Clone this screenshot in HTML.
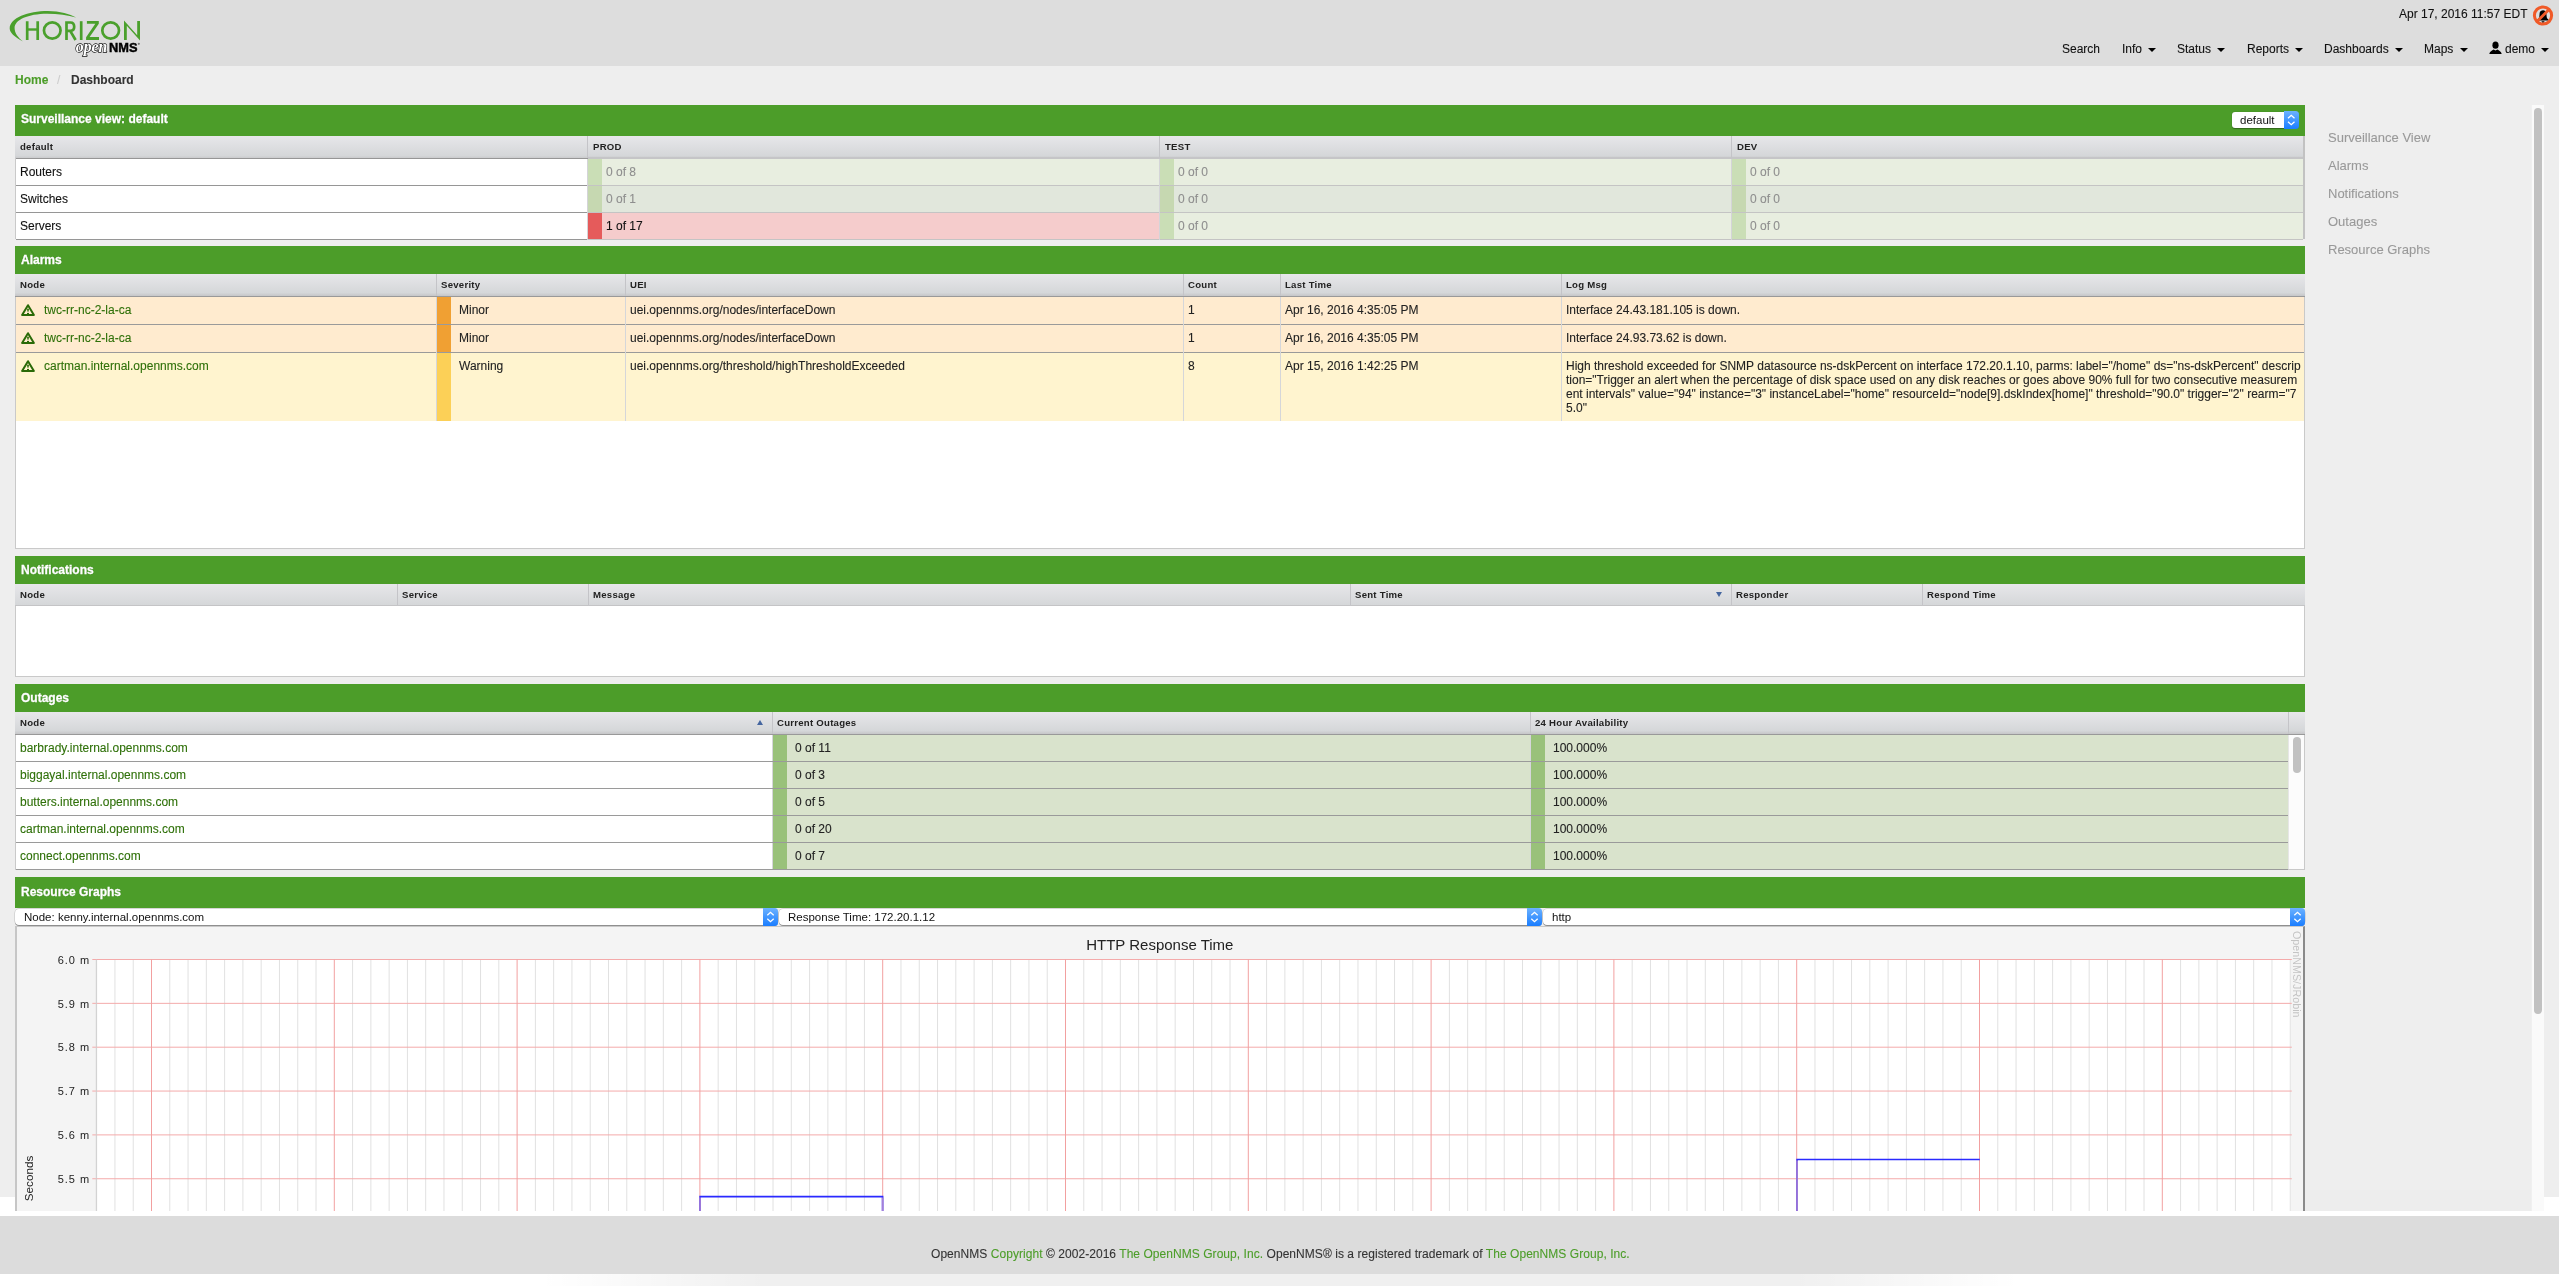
<!DOCTYPE html><html><head><meta charset="utf-8"><title>Dashboard</title><style>
*{box-sizing:border-box;margin:0;padding:0}
html,body{width:2559px;height:1286px;overflow:hidden;background:#fff}
body{position:relative;font-family:"Liberation Sans", sans-serif;font-size:12px;color:#222}
.abs{position:absolute}
.t{position:absolute;white-space:nowrap;line-height:1;-webkit-text-stroke:0.1px currentColor;will-change:transform}
.ph{position:absolute;left:15px;width:2290px;background:#4c9d29;color:#fff;font-weight:bold;font-size:12px}
.hdr{position:absolute;background:linear-gradient(#e7e7ea,#d5d7d9 85%,#c6c6c8);border-bottom:1px solid #999}
.hc{position:absolute;top:0;height:100%;border-left:1px solid #c4c4c8;font-size:10px;font-weight:bold;color:#222;white-space:nowrap}
.row{position:absolute;left:15px;width:2290px;border-bottom:1px solid #a9a9a9}
.cell{position:absolute;top:0;height:100%;white-space:nowrap}
.lnk{color:#2f7009}
</style></head><body>
<div class="abs" style="left:0;top:0;width:2559px;height:66px;background:#dddddd"></div>
<div class="abs" style="left:0;top:66px;width:2559px;height:1131px;background:#eeeeee"></div>
<div class="abs" style="left:15px;top:1190px;width:2529px;height:21px;background:#ededed"></div>
<div class="abs" style="left:0;top:1216px;width:2559px;height:58px;background:#dcdcdc"></div>
<div class="abs" style="left:540px;top:1274px;width:1480px;height:12px;background:linear-gradient(90deg,rgba(0,0,0,0),rgba(0,0,0,0.06) 15%,rgba(0,0,0,0.06) 85%,rgba(0,0,0,0))"></div>
<svg class="abs" style="left:0;top:0;will-change:transform" width="160" height="65" viewBox="0 0 160 65">
<path d="M23 41.6 C14 36.5 9.7 32.5 9.7 28.5 C9.7 18 28 11 47.8 11 C60 11 70 14 76 17.6 C68 15.3 58 13.8 47 13.8 C28 13.8 14.6 20 14.6 28 C14.6 33 18 37.5 23 41.6 Z" fill="#4aa02c"/>
<g fill="none" stroke="#4aa02c" stroke-width="2.7">
<path d="M27.2 21.2V40M37.7 21.2V40"/>
<path d="M27.2 29.5H37.7" stroke-width="2.4"/>
<ellipse cx="52.25" cy="30.5" rx="8.3" ry="8.1"/>
<path d="M66.5 21.2V40M66.5 22.5H70.5C73.8 22.5 74.2 24.5 74.2 26.8C74.2 29.2 73.2 30.9 70.5 30.9H66.5M70.2 30.9L75.6 40" stroke-linejoin="round"/>
<path d="M81.2 21.2V40"/>
<ellipse cx="110.65" cy="30.5" rx="8.35" ry="8.1"/>
</g>
<path d="M86.9 21.1H98.8V23.7L89.6 37H99V40H86.1V37.3L95.3 23.7H86.9Z" fill="#4aa02c"/>
<path d="M124 40V20.6L137.2 35.3V21.1H140V40.4L126.8 25.7V40Z" fill="#4aa02c"/>
<text x="75.8" y="52.1" font-family="Liberation Serif" font-style="italic" font-weight="bold" font-size="16.5" fill="#fff" stroke="#111" stroke-width="1.3" paint-order="stroke" textLength="31.6" lengthAdjust="spacingAndGlyphs">open</text>
<text x="109" y="51.6" font-family="Liberation Sans" font-weight="bold" font-size="13" fill="#000" stroke="#000" stroke-width="0.45" textLength="28.5" lengthAdjust="spacingAndGlyphs">NMS</text>
<circle cx="138.8" cy="43.8" r="1.1" fill="#777"/>
</svg>
<div class="t" style="left:2399px;top:8px;font-size:12px;color:#111">Apr 17, 2016 11:57 EDT</div>
<svg class="abs" style="left:2532px;top:5px" width="22" height="22" viewBox="0 0 22 22">
<path d="M11 5.2c-1.9 0-3.3 1.4-3.4 3.4l-0.3 3.4c-0.1 1.1-0.9 2-1.8 2.6v0.8h11v-0.8c-0.9-0.6-1.7-1.5-1.8-2.6l-0.3-3.4C14.3 6.6 12.9 5.2 11 5.2zM9.5 16.2a1.5 1.5 0 0 0 3 0z" fill="#000"/>
<circle cx="11" cy="10.5" r="8.6" fill="none" stroke="#f05a28" stroke-width="3"/>
<path d="M17 4.5L5 16.5" stroke="#f05a28" stroke-width="3"/>
</svg>
<div class="t" style="left:2061.5px;top:43px;font-size:12px;color:#111">Search</div>
<div class="t" style="left:2121.8px;top:43px;font-size:12px;color:#111">Info</div>
<div class="abs" style="left:2147.8px;top:48px;width:0;height:0;border-left:4px solid transparent;border-right:4px solid transparent;border-top:4px solid #000"></div>
<div class="t" style="left:2176.7px;top:43px;font-size:12px;color:#111">Status</div>
<div class="abs" style="left:2216.7px;top:48px;width:0;height:0;border-left:4px solid transparent;border-right:4px solid transparent;border-top:4px solid #000"></div>
<div class="t" style="left:2246.8px;top:43px;font-size:12px;color:#111">Reports</div>
<div class="abs" style="left:2294.8px;top:48px;width:0;height:0;border-left:4px solid transparent;border-right:4px solid transparent;border-top:4px solid #000"></div>
<div class="t" style="left:2324.4px;top:43px;font-size:12px;color:#111">Dashboards</div>
<div class="abs" style="left:2395.1px;top:48px;width:0;height:0;border-left:4px solid transparent;border-right:4px solid transparent;border-top:4px solid #000"></div>
<div class="t" style="left:2424.4px;top:43px;font-size:12px;color:#111">Maps</div>
<div class="abs" style="left:2459.7px;top:48px;width:0;height:0;border-left:4px solid transparent;border-right:4px solid transparent;border-top:4px solid #000"></div>
<div class="t" style="left:2505.3px;top:43px;font-size:12px;color:#111">demo</div>
<div class="abs" style="left:2541.3px;top:48px;width:0;height:0;border-left:4px solid transparent;border-right:4px solid transparent;border-top:4px solid #000"></div>
<svg class="abs" style="left:2489px;top:41px" width="14" height="14" viewBox="0 0 14 14">
<ellipse cx="6.5" cy="4.2" rx="3.1" ry="3.6" fill="#000"/>
<path d="M0.3 13 C0.8 10.5 3 9.6 4.6 8.6 L6.5 9.6 L8.4 8.6 C10 9.6 12.2 10.5 12.7 13 Z" fill="#000"/>
</svg>
<div class="t" style="left:15.3px;top:74px;font-size:12px;font-weight:bold;color:#4c9d29">Home</div>
<div class="t" style="left:57px;top:74px;font-size:12px;color:#ccc">/</div>
<div class="t" style="left:70.7px;top:74px;font-size:12px;font-weight:bold;color:#333">Dashboard</div>
<div class="t" style="left:2327.6px;top:130.5px;font-size:13px;color:#999">Surveillance View</div>
<div class="t" style="left:2327.6px;top:158.5px;font-size:13px;color:#999">Alarms</div>
<div class="t" style="left:2327.6px;top:186.5px;font-size:13px;color:#999">Notifications</div>
<div class="t" style="left:2327.6px;top:214.5px;font-size:13px;color:#999">Outages</div>
<div class="t" style="left:2327.6px;top:242.5px;font-size:13px;color:#999">Resource Graphs</div>
<div class="abs" style="left:2531px;top:105px;width:13px;height:1106px;background:#fafafa;border-left:1px solid #f0f0f0"></div>
<div class="abs" style="left:2534px;top:108px;width:8px;height:906px;background:#c1c1c1;border-radius:4px"></div>
<div class="ph" style="top:105px;height:31px"></div>
<div class="t" style="left:21.3px;top:112.5px;font-size:12px;font-weight:bold;color:#fff;text-shadow:0 0 1px rgba(20,70,0,0.55);-webkit-text-stroke:0.3px #fff">Surveillance view: default</div>
<div class="abs" style="left:2232px;top:112px;width:53px;height:16px;background:#fff;border-radius:3px 0 0 3px;box-shadow:0 0.5px 1px rgba(0,0,0,0.35)"></div>
<div class="t" style="left:2239.9px;top:114.5px;font-size:11.5px;color:#111;-webkit-text-stroke:0">default</div>
<div class="abs" style="left:2284.2px;top:111px;width:14.5px;height:18px;background:linear-gradient(#6cb2ff,#1a7dff);border-radius:0 3.5px 3.5px 0"></div>
<svg class="abs" style="left:2284.2px;top:111px" width="14.5" height="18" viewBox="0 0 14.5 18"><path d="M4 7.3L7.25 4.3L10.5 7.3M4 10.7L7.25 13.7L10.5 10.7" fill="none" stroke="#fff" stroke-width="1.3"/></svg>
<div class="abs" style="left:15px;top:136px;width:2290px;height:103px;background:#fff;border:1px solid #c9c9c9;border-top:0"></div>
<div class="hdr" style="left:15px;top:136px;width:2290px;height:23px;border-bottom:0"></div><div class="abs" style="left:16px;top:158px;width:572px;height:1px;background:#969696"></div><div class="abs" style="left:588px;top:157px;width:1715px;height:2px;background:#c5c5c7"></div>
<div class="t" style="left:20px;top:142px;font-size:9.6px;font-weight:bold;color:#222;-webkit-text-stroke:0;letter-spacing:0.25px">default</div>
<div class="t" style="left:593px;top:142px;font-size:9.6px;font-weight:bold;color:#222;-webkit-text-stroke:0;letter-spacing:0.25px">PROD</div>
<div class="abs" style="left:587px;top:136px;width:1px;height:22px;background:#c4c4c8"></div>
<div class="t" style="left:1165px;top:142px;font-size:9.6px;font-weight:bold;color:#222;-webkit-text-stroke:0;letter-spacing:0.25px">TEST</div>
<div class="abs" style="left:1159px;top:136px;width:1px;height:22px;background:#c4c4c8"></div>
<div class="t" style="left:1737px;top:142px;font-size:9.6px;font-weight:bold;color:#222;-webkit-text-stroke:0;letter-spacing:0.25px">DEV</div>
<div class="abs" style="left:1731px;top:136px;width:1px;height:22px;background:#c4c4c8"></div>
<div class="abs" style="left:2303px;top:136px;width:2px;height:103px;background:#c2c2c2"></div>
<div class="abs" style="left:16px;top:159px;width:572px;height:27px;background:#fff;border-bottom:1px solid #969696"></div>
<div class="t" style="left:20px;top:166px;font-size:12px;color:#111">Routers</div>
<div class="abs" style="left:588px;top:159px;width:572px;height:27px;background:#e8eee0;border-bottom:1px solid #c4c4c4"></div>
<div class="abs" style="left:588px;top:159px;width:14px;height:26px;background:#cadeb6"></div>
<div class="t" style="left:606px;top:166px;font-size:12px;color:#8e8e8e">0 of 8</div>
<div class="abs" style="left:1160px;top:159px;width:572px;height:27px;background:#e8eee0;border-bottom:1px solid #c4c4c4"></div>
<div class="abs" style="left:1160px;top:159px;width:14px;height:26px;background:#cadeb6"></div>
<div class="t" style="left:1178px;top:166px;font-size:12px;color:#8e8e8e">0 of 0</div>
<div class="abs" style="left:1732px;top:159px;width:571px;height:27px;background:#e8eee0;border-bottom:1px solid #c4c4c4"></div>
<div class="abs" style="left:1732px;top:159px;width:14px;height:26px;background:#cadeb6"></div>
<div class="t" style="left:1750px;top:166px;font-size:12px;color:#8e8e8e">0 of 0</div>
<div class="abs" style="left:587px;top:159px;width:1px;height:27px;background:#d4d4d8"></div>
<div class="abs" style="left:1159px;top:159px;width:1px;height:27px;background:#d4d4d8"></div>
<div class="abs" style="left:1731px;top:159px;width:1px;height:27px;background:#d4d4d8"></div>
<div class="abs" style="left:16px;top:186px;width:572px;height:27px;background:#fff;border-bottom:1px solid #969696"></div>
<div class="t" style="left:20px;top:193px;font-size:12px;color:#111">Switches</div>
<div class="abs" style="left:588px;top:186px;width:572px;height:27px;background:#e1e7dc;border-bottom:1px solid #c4c4c4"></div>
<div class="abs" style="left:588px;top:186px;width:14px;height:26px;background:#c6d8b1"></div>
<div class="t" style="left:606px;top:193px;font-size:12px;color:#8e8e8e">0 of 1</div>
<div class="abs" style="left:1160px;top:186px;width:572px;height:27px;background:#e1e7dc;border-bottom:1px solid #c4c4c4"></div>
<div class="abs" style="left:1160px;top:186px;width:14px;height:26px;background:#c6d8b1"></div>
<div class="t" style="left:1178px;top:193px;font-size:12px;color:#8e8e8e">0 of 0</div>
<div class="abs" style="left:1732px;top:186px;width:571px;height:27px;background:#e1e7dc;border-bottom:1px solid #c4c4c4"></div>
<div class="abs" style="left:1732px;top:186px;width:14px;height:26px;background:#c6d8b1"></div>
<div class="t" style="left:1750px;top:193px;font-size:12px;color:#8e8e8e">0 of 0</div>
<div class="abs" style="left:587px;top:186px;width:1px;height:27px;background:#d4d4d8"></div>
<div class="abs" style="left:1159px;top:186px;width:1px;height:27px;background:#d4d4d8"></div>
<div class="abs" style="left:1731px;top:186px;width:1px;height:27px;background:#d4d4d8"></div>
<div class="abs" style="left:16px;top:213px;width:572px;height:27px;background:#fff;border-bottom:1px solid #969696"></div>
<div class="t" style="left:20px;top:220px;font-size:12px;color:#111">Servers</div>
<div class="abs" style="left:588px;top:213px;width:572px;height:27px;background:#f5cccc;border-bottom:1px solid #c4c4c4"></div>
<div class="abs" style="left:588px;top:213px;width:14px;height:26px;background:#e55b5b"></div>
<div class="t" style="left:606px;top:220px;font-size:12px;color:#111">1 of 17</div>
<div class="abs" style="left:1160px;top:213px;width:572px;height:27px;background:#e8eee0;border-bottom:1px solid #c4c4c4"></div>
<div class="abs" style="left:1160px;top:213px;width:14px;height:26px;background:#cadeb6"></div>
<div class="t" style="left:1178px;top:220px;font-size:12px;color:#8e8e8e">0 of 0</div>
<div class="abs" style="left:1732px;top:213px;width:571px;height:27px;background:#e8eee0;border-bottom:1px solid #c4c4c4"></div>
<div class="abs" style="left:1732px;top:213px;width:14px;height:26px;background:#cadeb6"></div>
<div class="t" style="left:1750px;top:220px;font-size:12px;color:#8e8e8e">0 of 0</div>
<div class="abs" style="left:587px;top:213px;width:1px;height:27px;background:#d4d4d8"></div>
<div class="abs" style="left:1159px;top:213px;width:1px;height:27px;background:#d4d4d8"></div>
<div class="abs" style="left:1731px;top:213px;width:1px;height:27px;background:#d4d4d8"></div>
<div class="ph" style="top:246px;height:28px"></div>
<div class="t" style="left:21px;top:253.5px;font-size:12px;font-weight:bold;color:#fff;text-shadow:0 0 1px rgba(20,70,0,0.55);-webkit-text-stroke:0.3px #fff">Alarms</div>
<div class="abs" style="left:15px;top:274px;width:2290px;height:275px;background:#fff;border:1px solid #c9c9c9;border-top:0"></div>
<div class="hdr" style="left:15px;top:274px;width:2290px;height:23px"></div>
<div class="t" style="left:20px;top:280px;font-size:9.6px;font-weight:bold;color:#222;-webkit-text-stroke:0;letter-spacing:0.25px">Node</div>
<div class="t" style="left:441px;top:280px;font-size:9.6px;font-weight:bold;color:#222;-webkit-text-stroke:0;letter-spacing:0.25px">Severity</div>
<div class="abs" style="left:436px;top:274px;width:1px;height:22px;background:#c4c4c8"></div>
<div class="t" style="left:630px;top:280px;font-size:9.6px;font-weight:bold;color:#222;-webkit-text-stroke:0;letter-spacing:0.25px">UEI</div>
<div class="abs" style="left:625px;top:274px;width:1px;height:22px;background:#c4c4c8"></div>
<div class="t" style="left:1188px;top:280px;font-size:9.6px;font-weight:bold;color:#222;-webkit-text-stroke:0;letter-spacing:0.25px">Count</div>
<div class="abs" style="left:1183px;top:274px;width:1px;height:22px;background:#c4c4c8"></div>
<div class="t" style="left:1285px;top:280px;font-size:9.6px;font-weight:bold;color:#222;-webkit-text-stroke:0;letter-spacing:0.25px">Last Time</div>
<div class="abs" style="left:1280px;top:274px;width:1px;height:22px;background:#c4c4c8"></div>
<div class="t" style="left:1566px;top:280px;font-size:9.6px;font-weight:bold;color:#222;-webkit-text-stroke:0;letter-spacing:0.25px">Log Msg</div>
<div class="abs" style="left:1561px;top:274px;width:1px;height:22px;background:#c4c4c8"></div>
<div class="abs" style="left:16px;top:297px;width:2288px;height:28px;background:#ffebcf;border-bottom:1px solid #9a9a9a;"></div>
<div class="abs" style="left:437px;top:297px;width:14px;height:27px;background:#f0a033"></div>
<div class="abs" style="left:436px;top:297px;width:1px;height:28px;background:#d5d6d9"></div>
<div class="abs" style="left:625px;top:297px;width:1px;height:28px;background:#d5d6d9"></div>
<div class="abs" style="left:1183px;top:297px;width:1px;height:28px;background:#d5d6d9"></div>
<div class="abs" style="left:1280px;top:297px;width:1px;height:28px;background:#d5d6d9"></div>
<div class="abs" style="left:1561px;top:297px;width:1px;height:28px;background:#d5d6d9"></div>
<svg class="abs" style="left:20px;top:303px" width="16" height="14" viewBox="0 0 16 14"><path d="M8 2.2L13.9 11.9H2.1Z" fill="none" stroke="#2a6a08" stroke-width="2" stroke-linejoin="round"/><path d="M7 5.8H9L8.5 8.8H7.5Z" fill="#2a6a08"/><rect x="7" y="9.9" width="2" height="1.6" fill="#2a6a08"/></svg>
<div class="t lnk" style="left:44px;top:303.5px">twc-rr-nc-2-la-ca</div>
<div class="t" style="left:459px;top:303.5px">Minor</div>
<div class="t" style="left:630px;top:303.5px">uei.opennms.org/nodes/interfaceDown</div>
<div class="t" style="left:1188px;top:303.5px">1</div>
<div class="t" style="left:1285px;top:303.5px">Apr 16, 2016 4:35:05 PM</div>
<div class="t" style="left:1566px;top:303.5px">Interface 24.43.181.105 is down.</div>
<div class="abs" style="left:16px;top:325px;width:2288px;height:28px;background:#ffebcf;border-bottom:1px solid #9a9a9a;"></div>
<div class="abs" style="left:437px;top:325px;width:14px;height:27px;background:#f0a033"></div>
<div class="abs" style="left:436px;top:325px;width:1px;height:28px;background:#d5d6d9"></div>
<div class="abs" style="left:625px;top:325px;width:1px;height:28px;background:#d5d6d9"></div>
<div class="abs" style="left:1183px;top:325px;width:1px;height:28px;background:#d5d6d9"></div>
<div class="abs" style="left:1280px;top:325px;width:1px;height:28px;background:#d5d6d9"></div>
<div class="abs" style="left:1561px;top:325px;width:1px;height:28px;background:#d5d6d9"></div>
<svg class="abs" style="left:20px;top:331px" width="16" height="14" viewBox="0 0 16 14"><path d="M8 2.2L13.9 11.9H2.1Z" fill="none" stroke="#2a6a08" stroke-width="2" stroke-linejoin="round"/><path d="M7 5.8H9L8.5 8.8H7.5Z" fill="#2a6a08"/><rect x="7" y="9.9" width="2" height="1.6" fill="#2a6a08"/></svg>
<div class="t lnk" style="left:44px;top:331.5px">twc-rr-nc-2-la-ca</div>
<div class="t" style="left:459px;top:331.5px">Minor</div>
<div class="t" style="left:630px;top:331.5px">uei.opennms.org/nodes/interfaceDown</div>
<div class="t" style="left:1188px;top:331.5px">1</div>
<div class="t" style="left:1285px;top:331.5px">Apr 16, 2016 4:35:05 PM</div>
<div class="t" style="left:1566px;top:331.5px">Interface 24.93.73.62 is down.</div>
<div class="abs" style="left:16px;top:353px;width:2288px;height:68px;background:#fff4cf;"></div>
<div class="abs" style="left:437px;top:353px;width:14px;height:68px;background:#fcd057"></div>
<div class="abs" style="left:436px;top:353px;width:1px;height:68px;background:#d5d6d9"></div>
<div class="abs" style="left:625px;top:353px;width:1px;height:68px;background:#d5d6d9"></div>
<div class="abs" style="left:1183px;top:353px;width:1px;height:68px;background:#d5d6d9"></div>
<div class="abs" style="left:1280px;top:353px;width:1px;height:68px;background:#d5d6d9"></div>
<div class="abs" style="left:1561px;top:353px;width:1px;height:68px;background:#d5d6d9"></div>
<svg class="abs" style="left:20px;top:359px" width="16" height="14" viewBox="0 0 16 14"><path d="M8 2.2L13.9 11.9H2.1Z" fill="none" stroke="#2a6a08" stroke-width="2" stroke-linejoin="round"/><path d="M7 5.8H9L8.5 8.8H7.5Z" fill="#2a6a08"/><rect x="7" y="9.9" width="2" height="1.6" fill="#2a6a08"/></svg>
<div class="t lnk" style="left:44px;top:359.5px">cartman.internal.opennms.com</div>
<div class="t" style="left:459px;top:359.5px">Warning</div>
<div class="t" style="left:630px;top:359.5px">uei.opennms.org/threshold/highThresholdExceeded</div>
<div class="t" style="left:1188px;top:359.5px">8</div>
<div class="t" style="left:1285px;top:359.5px">Apr 15, 2016 1:42:25 PM</div>
<div class="t" style="left:1566px;top:359.5px">High threshold exceeded for SNMP datasource ns-dskPercent on interface 172.20.1.10, parms: label=&quot;/home&quot; ds=&quot;ns-dskPercent&quot; descrip</div>
<div class="t" style="left:1566px;top:373.5px">tion=&quot;Trigger an alert when the percentage of disk space used on any disk reaches or goes above 90% full for two consecutive measurem</div>
<div class="t" style="left:1566px;top:387.5px">ent intervals&quot; value=&quot;94&quot; instance=&quot;3&quot; instanceLabel=&quot;home&quot; resourceId=&quot;node[9].dskIndex[home]&quot; threshold=&quot;90.0&quot; trigger=&quot;2&quot; rearm=&quot;7</div>
<div class="t" style="left:1566px;top:401.5px">5.0&quot;</div>
<div class="ph" style="top:556px;height:28px"></div>
<div class="t" style="left:21px;top:563.5px;font-size:12px;font-weight:bold;color:#fff;text-shadow:0 0 1px rgba(20,70,0,0.55);-webkit-text-stroke:0.3px #fff">Notifications</div>
<div class="abs" style="left:15px;top:584px;width:2290px;height:93px;background:#fff;border:1px solid #c9c9c9;border-top:0"></div>
<div class="hdr" style="left:15px;top:584px;width:2290px;height:22px;border-bottom-color:#c4c4c6;background:linear-gradient(#e7e7ea,#d5d7d9)"></div>
<div class="t" style="left:20px;top:590px;font-size:9.6px;font-weight:bold;color:#222;-webkit-text-stroke:0;letter-spacing:0.25px">Node</div>
<div class="t" style="left:402px;top:590px;font-size:9.6px;font-weight:bold;color:#222;-webkit-text-stroke:0;letter-spacing:0.25px">Service</div>
<div class="abs" style="left:397px;top:584px;width:1px;height:22px;background:#c4c4c8"></div>
<div class="t" style="left:593px;top:590px;font-size:9.6px;font-weight:bold;color:#222;-webkit-text-stroke:0;letter-spacing:0.25px">Message</div>
<div class="abs" style="left:588px;top:584px;width:1px;height:22px;background:#c4c4c8"></div>
<div class="t" style="left:1355px;top:590px;font-size:9.6px;font-weight:bold;color:#222;-webkit-text-stroke:0;letter-spacing:0.25px">Sent Time</div>
<div class="abs" style="left:1350px;top:584px;width:1px;height:22px;background:#c4c4c8"></div>
<div class="t" style="left:1736px;top:590px;font-size:9.6px;font-weight:bold;color:#222;-webkit-text-stroke:0;letter-spacing:0.25px">Responder</div>
<div class="abs" style="left:1731px;top:584px;width:1px;height:22px;background:#c4c4c8"></div>
<div class="t" style="left:1927px;top:590px;font-size:9.6px;font-weight:bold;color:#222;-webkit-text-stroke:0;letter-spacing:0.25px">Respond Time</div>
<div class="abs" style="left:1922px;top:584px;width:1px;height:22px;background:#c4c4c8"></div>
<div class="abs" style="left:1715.7px;top:591.8px;width:0;height:0;border-left:3.2px solid transparent;border-right:3.2px solid transparent;border-top:5.3px solid #4566a0"></div>
<div class="ph" style="top:684px;height:28px"></div>
<div class="t" style="left:21px;top:691.5px;font-size:12px;font-weight:bold;color:#fff;text-shadow:0 0 1px rgba(20,70,0,0.55);-webkit-text-stroke:0.3px #fff">Outages</div>
<div class="abs" style="left:15px;top:712px;width:2290px;height:158px;background:#fff;border:1px solid #c9c9c9;border-top:0"></div>
<div class="hdr" style="left:15px;top:712px;width:2290px;height:23px"></div>
<div class="t" style="left:20px;top:718px;font-size:9.6px;font-weight:bold;color:#222;-webkit-text-stroke:0;letter-spacing:0.25px">Node</div>
<div class="t" style="left:777px;top:718px;font-size:9.6px;font-weight:bold;color:#222;-webkit-text-stroke:0;letter-spacing:0.25px">Current Outages</div>
<div class="abs" style="left:772px;top:712px;width:1px;height:22px;background:#c4c4c8"></div>
<div class="t" style="left:1535px;top:718px;font-size:9.6px;font-weight:bold;color:#222;-webkit-text-stroke:0;letter-spacing:0.25px">24 Hour Availability</div>
<div class="abs" style="left:1530px;top:712px;width:1px;height:22px;background:#c4c4c8"></div>
<div class="abs" style="left:2288px;top:712px;width:1px;height:22px;background:#c4c4c8"></div>
<div class="abs" style="left:757px;top:720px;width:0;height:0;border-left:3px solid transparent;border-right:3px solid transparent;border-bottom:5px solid #4566a0"></div>
<div class="abs" style="left:16px;top:735px;width:756px;height:27px;background:#fff;border-bottom:1px solid #9a9a9a"></div>
<div class="abs" style="left:772px;top:735px;width:1516px;height:27px;background:#d9e3cc;border-bottom:1px solid #9a9a9a"></div>
<div class="abs" style="left:773px;top:735px;width:14px;height:26px;background:#99c17a"></div>
<div class="abs" style="left:1531px;top:735px;width:14px;height:26px;background:#99c17a"></div>
<div class="abs" style="left:772px;top:735px;width:1px;height:26px;background:#d6d6da"></div>
<div class="abs" style="left:1530px;top:735px;width:1px;height:26px;background:#d6d6da"></div>
<div class="t lnk" style="left:20.3px;top:742px">barbrady.internal.opennms.com</div>
<div class="t" style="left:795px;top:742px">0 of 11</div>
<div class="t" style="left:1552.7px;top:742px">100.000%</div>
<div class="abs" style="left:16px;top:762px;width:756px;height:27px;background:#fff;border-bottom:1px solid #9a9a9a"></div>
<div class="abs" style="left:772px;top:762px;width:1516px;height:27px;background:#d9e3cc;border-bottom:1px solid #9a9a9a"></div>
<div class="abs" style="left:773px;top:762px;width:14px;height:26px;background:#99c17a"></div>
<div class="abs" style="left:1531px;top:762px;width:14px;height:26px;background:#99c17a"></div>
<div class="abs" style="left:772px;top:762px;width:1px;height:26px;background:#d6d6da"></div>
<div class="abs" style="left:1530px;top:762px;width:1px;height:26px;background:#d6d6da"></div>
<div class="t lnk" style="left:20.3px;top:769px">biggayal.internal.opennms.com</div>
<div class="t" style="left:795px;top:769px">0 of 3</div>
<div class="t" style="left:1552.7px;top:769px">100.000%</div>
<div class="abs" style="left:16px;top:789px;width:756px;height:27px;background:#fff;border-bottom:1px solid #9a9a9a"></div>
<div class="abs" style="left:772px;top:789px;width:1516px;height:27px;background:#d9e3cc;border-bottom:1px solid #9a9a9a"></div>
<div class="abs" style="left:773px;top:789px;width:14px;height:26px;background:#99c17a"></div>
<div class="abs" style="left:1531px;top:789px;width:14px;height:26px;background:#99c17a"></div>
<div class="abs" style="left:772px;top:789px;width:1px;height:26px;background:#d6d6da"></div>
<div class="abs" style="left:1530px;top:789px;width:1px;height:26px;background:#d6d6da"></div>
<div class="t lnk" style="left:20.3px;top:796px">butters.internal.opennms.com</div>
<div class="t" style="left:795px;top:796px">0 of 5</div>
<div class="t" style="left:1552.7px;top:796px">100.000%</div>
<div class="abs" style="left:16px;top:816px;width:756px;height:27px;background:#fff;border-bottom:1px solid #9a9a9a"></div>
<div class="abs" style="left:772px;top:816px;width:1516px;height:27px;background:#d9e3cc;border-bottom:1px solid #9a9a9a"></div>
<div class="abs" style="left:773px;top:816px;width:14px;height:26px;background:#99c17a"></div>
<div class="abs" style="left:1531px;top:816px;width:14px;height:26px;background:#99c17a"></div>
<div class="abs" style="left:772px;top:816px;width:1px;height:26px;background:#d6d6da"></div>
<div class="abs" style="left:1530px;top:816px;width:1px;height:26px;background:#d6d6da"></div>
<div class="t lnk" style="left:20.3px;top:823px">cartman.internal.opennms.com</div>
<div class="t" style="left:795px;top:823px">0 of 20</div>
<div class="t" style="left:1552.7px;top:823px">100.000%</div>
<div class="abs" style="left:16px;top:843px;width:756px;height:27px;background:#fff;border-bottom:1px solid #9a9a9a"></div>
<div class="abs" style="left:772px;top:843px;width:1516px;height:27px;background:#d9e3cc;border-bottom:1px solid #9a9a9a"></div>
<div class="abs" style="left:773px;top:843px;width:14px;height:26px;background:#99c17a"></div>
<div class="abs" style="left:1531px;top:843px;width:14px;height:26px;background:#99c17a"></div>
<div class="abs" style="left:772px;top:843px;width:1px;height:26px;background:#d6d6da"></div>
<div class="abs" style="left:1530px;top:843px;width:1px;height:26px;background:#d6d6da"></div>
<div class="t lnk" style="left:20.3px;top:850px">connect.opennms.com</div>
<div class="t" style="left:795px;top:850px">0 of 7</div>
<div class="t" style="left:1552.7px;top:850px">100.000%</div>
<div class="abs" style="left:2288px;top:735px;width:16px;height:134px;background:#fcfcfc;border-left:1px solid #e6e6e6"></div>
<div class="abs" style="left:2293px;top:737px;width:8px;height:36px;background:#c1c1c1;border-radius:4px"></div>
<div class="ph" style="top:877px;height:31px"></div>
<div class="t" style="left:21px;top:885.5px;font-size:12px;font-weight:bold;color:#fff;text-shadow:0 0 1px rgba(20,70,0,0.55);-webkit-text-stroke:0.3px #fff">Resource Graphs</div>
<div class="abs" style="left:15px;top:909px;width:763px;height:16px;background:#fff;border-radius:4px;box-shadow:0 0 0 0.5px rgba(0,0,0,0.2),0 1px 0 rgba(0,0,0,0.33)"></div>
<div class="t" style="left:23.5px;top:911.5px;font-size:11.5px;color:#111;-webkit-text-stroke:0">Node: kenny.internal.opennms.com</div>
<div class="abs" style="left:763px;top:908px;width:15px;height:18px;background:linear-gradient(#6cb2ff,#1a7dff);border-radius:0 3.5px 3.5px 0"></div>
<svg class="abs" style="left:763px;top:908px" width="15" height="18" viewBox="0 0 15 18"><path d="M4.3 7.3L7.5 4.3L10.7 7.3M4.3 10.7L7.5 13.7L10.7 10.7" fill="none" stroke="#fff" stroke-width="1.3"/></svg>
<div class="abs" style="left:779px;top:909px;width:763px;height:16px;background:#fff;border-radius:4px;box-shadow:0 0 0 0.5px rgba(0,0,0,0.2),0 1px 0 rgba(0,0,0,0.33)"></div>
<div class="t" style="left:787.5px;top:911.5px;font-size:11.5px;color:#111;-webkit-text-stroke:0">Response Time: 172.20.1.12</div>
<div class="abs" style="left:1527px;top:908px;width:15px;height:18px;background:linear-gradient(#6cb2ff,#1a7dff);border-radius:0 3.5px 3.5px 0"></div>
<svg class="abs" style="left:1527px;top:908px" width="15" height="18" viewBox="0 0 15 18"><path d="M4.3 7.3L7.5 4.3L10.7 7.3M4.3 10.7L7.5 13.7L10.7 10.7" fill="none" stroke="#fff" stroke-width="1.3"/></svg>
<div class="abs" style="left:1543px;top:909px;width:762px;height:16px;background:#fff;border-radius:4px;box-shadow:0 0 0 0.5px rgba(0,0,0,0.2),0 1px 0 rgba(0,0,0,0.33)"></div>
<div class="t" style="left:1551.5px;top:911.5px;font-size:11.5px;color:#111;-webkit-text-stroke:0">http</div>
<div class="abs" style="left:2290px;top:908px;width:15px;height:18px;background:linear-gradient(#6cb2ff,#1a7dff);border-radius:0 3.5px 3.5px 0"></div>
<svg class="abs" style="left:2290px;top:908px" width="15" height="18" viewBox="0 0 15 18"><path d="M4.3 7.3L7.5 4.3L10.7 7.3M4.3 10.7L7.5 13.7L10.7 10.7" fill="none" stroke="#fff" stroke-width="1.3"/></svg>
<div class="abs" style="left:15px;top:926px;width:2290px;height:285px;background:#f4f4f4;border-left:2px solid #c6c6c6;border-top:1px solid #c9c9c9;border-right:2px solid #8a8a8a"></div>
<svg class="abs" style="left:0;top:900px" width="2320" height="311" viewBox="0 900 2320 311"><rect x="96.3" y="959.5" width="2194.5" height="251.5" fill="#fff"/><g stroke="#e1e1e1" stroke-width="1"><line x1="96.66" y1="959.5" x2="96.66" y2="1211"/><line x1="114.94" y1="959.5" x2="114.94" y2="1211"/><line x1="133.22" y1="959.5" x2="133.22" y2="1211"/><line x1="169.78" y1="959.5" x2="169.78" y2="1211"/><line x1="188.06" y1="959.5" x2="188.06" y2="1211"/><line x1="206.34" y1="959.5" x2="206.34" y2="1211"/><line x1="224.62" y1="959.5" x2="224.62" y2="1211"/><line x1="242.90" y1="959.5" x2="242.90" y2="1211"/><line x1="261.18" y1="959.5" x2="261.18" y2="1211"/><line x1="279.46" y1="959.5" x2="279.46" y2="1211"/><line x1="297.74" y1="959.5" x2="297.74" y2="1211"/><line x1="316.02" y1="959.5" x2="316.02" y2="1211"/><line x1="352.58" y1="959.5" x2="352.58" y2="1211"/><line x1="370.86" y1="959.5" x2="370.86" y2="1211"/><line x1="389.14" y1="959.5" x2="389.14" y2="1211"/><line x1="407.42" y1="959.5" x2="407.42" y2="1211"/><line x1="425.70" y1="959.5" x2="425.70" y2="1211"/><line x1="443.98" y1="959.5" x2="443.98" y2="1211"/><line x1="462.26" y1="959.5" x2="462.26" y2="1211"/><line x1="480.54" y1="959.5" x2="480.54" y2="1211"/><line x1="498.82" y1="959.5" x2="498.82" y2="1211"/><line x1="535.38" y1="959.5" x2="535.38" y2="1211"/><line x1="553.66" y1="959.5" x2="553.66" y2="1211"/><line x1="571.94" y1="959.5" x2="571.94" y2="1211"/><line x1="590.22" y1="959.5" x2="590.22" y2="1211"/><line x1="608.50" y1="959.5" x2="608.50" y2="1211"/><line x1="626.78" y1="959.5" x2="626.78" y2="1211"/><line x1="645.06" y1="959.5" x2="645.06" y2="1211"/><line x1="663.34" y1="959.5" x2="663.34" y2="1211"/><line x1="681.62" y1="959.5" x2="681.62" y2="1211"/><line x1="718.18" y1="959.5" x2="718.18" y2="1211"/><line x1="736.46" y1="959.5" x2="736.46" y2="1211"/><line x1="754.74" y1="959.5" x2="754.74" y2="1211"/><line x1="773.02" y1="959.5" x2="773.02" y2="1211"/><line x1="791.30" y1="959.5" x2="791.30" y2="1211"/><line x1="809.58" y1="959.5" x2="809.58" y2="1211"/><line x1="827.86" y1="959.5" x2="827.86" y2="1211"/><line x1="846.14" y1="959.5" x2="846.14" y2="1211"/><line x1="864.42" y1="959.5" x2="864.42" y2="1211"/><line x1="900.98" y1="959.5" x2="900.98" y2="1211"/><line x1="919.26" y1="959.5" x2="919.26" y2="1211"/><line x1="937.54" y1="959.5" x2="937.54" y2="1211"/><line x1="955.82" y1="959.5" x2="955.82" y2="1211"/><line x1="974.10" y1="959.5" x2="974.10" y2="1211"/><line x1="992.38" y1="959.5" x2="992.38" y2="1211"/><line x1="1010.66" y1="959.5" x2="1010.66" y2="1211"/><line x1="1028.94" y1="959.5" x2="1028.94" y2="1211"/><line x1="1047.22" y1="959.5" x2="1047.22" y2="1211"/><line x1="1083.78" y1="959.5" x2="1083.78" y2="1211"/><line x1="1102.06" y1="959.5" x2="1102.06" y2="1211"/><line x1="1120.34" y1="959.5" x2="1120.34" y2="1211"/><line x1="1138.62" y1="959.5" x2="1138.62" y2="1211"/><line x1="1156.90" y1="959.5" x2="1156.90" y2="1211"/><line x1="1175.18" y1="959.5" x2="1175.18" y2="1211"/><line x1="1193.46" y1="959.5" x2="1193.46" y2="1211"/><line x1="1211.74" y1="959.5" x2="1211.74" y2="1211"/><line x1="1230.02" y1="959.5" x2="1230.02" y2="1211"/><line x1="1266.58" y1="959.5" x2="1266.58" y2="1211"/><line x1="1284.86" y1="959.5" x2="1284.86" y2="1211"/><line x1="1303.14" y1="959.5" x2="1303.14" y2="1211"/><line x1="1321.42" y1="959.5" x2="1321.42" y2="1211"/><line x1="1339.70" y1="959.5" x2="1339.70" y2="1211"/><line x1="1357.98" y1="959.5" x2="1357.98" y2="1211"/><line x1="1376.26" y1="959.5" x2="1376.26" y2="1211"/><line x1="1394.54" y1="959.5" x2="1394.54" y2="1211"/><line x1="1412.82" y1="959.5" x2="1412.82" y2="1211"/><line x1="1449.38" y1="959.5" x2="1449.38" y2="1211"/><line x1="1467.66" y1="959.5" x2="1467.66" y2="1211"/><line x1="1485.94" y1="959.5" x2="1485.94" y2="1211"/><line x1="1504.22" y1="959.5" x2="1504.22" y2="1211"/><line x1="1522.50" y1="959.5" x2="1522.50" y2="1211"/><line x1="1540.78" y1="959.5" x2="1540.78" y2="1211"/><line x1="1559.06" y1="959.5" x2="1559.06" y2="1211"/><line x1="1577.34" y1="959.5" x2="1577.34" y2="1211"/><line x1="1595.62" y1="959.5" x2="1595.62" y2="1211"/><line x1="1632.18" y1="959.5" x2="1632.18" y2="1211"/><line x1="1650.46" y1="959.5" x2="1650.46" y2="1211"/><line x1="1668.74" y1="959.5" x2="1668.74" y2="1211"/><line x1="1687.02" y1="959.5" x2="1687.02" y2="1211"/><line x1="1705.30" y1="959.5" x2="1705.30" y2="1211"/><line x1="1723.58" y1="959.5" x2="1723.58" y2="1211"/><line x1="1741.86" y1="959.5" x2="1741.86" y2="1211"/><line x1="1760.14" y1="959.5" x2="1760.14" y2="1211"/><line x1="1778.42" y1="959.5" x2="1778.42" y2="1211"/><line x1="1814.98" y1="959.5" x2="1814.98" y2="1211"/><line x1="1833.26" y1="959.5" x2="1833.26" y2="1211"/><line x1="1851.54" y1="959.5" x2="1851.54" y2="1211"/><line x1="1869.82" y1="959.5" x2="1869.82" y2="1211"/><line x1="1888.10" y1="959.5" x2="1888.10" y2="1211"/><line x1="1906.38" y1="959.5" x2="1906.38" y2="1211"/><line x1="1924.66" y1="959.5" x2="1924.66" y2="1211"/><line x1="1942.94" y1="959.5" x2="1942.94" y2="1211"/><line x1="1961.22" y1="959.5" x2="1961.22" y2="1211"/><line x1="1997.78" y1="959.5" x2="1997.78" y2="1211"/><line x1="2016.06" y1="959.5" x2="2016.06" y2="1211"/><line x1="2034.34" y1="959.5" x2="2034.34" y2="1211"/><line x1="2052.62" y1="959.5" x2="2052.62" y2="1211"/><line x1="2070.90" y1="959.5" x2="2070.90" y2="1211"/><line x1="2089.18" y1="959.5" x2="2089.18" y2="1211"/><line x1="2107.46" y1="959.5" x2="2107.46" y2="1211"/><line x1="2125.74" y1="959.5" x2="2125.74" y2="1211"/><line x1="2144.02" y1="959.5" x2="2144.02" y2="1211"/><line x1="2180.58" y1="959.5" x2="2180.58" y2="1211"/><line x1="2198.86" y1="959.5" x2="2198.86" y2="1211"/><line x1="2217.14" y1="959.5" x2="2217.14" y2="1211"/><line x1="2235.42" y1="959.5" x2="2235.42" y2="1211"/><line x1="2253.70" y1="959.5" x2="2253.70" y2="1211"/><line x1="2271.98" y1="959.5" x2="2271.98" y2="1211"/><line x1="2290.26" y1="959.5" x2="2290.26" y2="1211"/></g><g stroke="#f4aaaa" stroke-width="1"><line x1="92.3" y1="959.50" x2="2291.8" y2="959.50"/><line x1="92.3" y1="1003.35" x2="2291.8" y2="1003.35"/><line x1="92.3" y1="1047.20" x2="2291.8" y2="1047.20"/><line x1="92.3" y1="1091.05" x2="2291.8" y2="1091.05"/><line x1="92.3" y1="1134.90" x2="2291.8" y2="1134.90"/><line x1="92.3" y1="1178.75" x2="2291.8" y2="1178.75"/></g><g stroke="#f2a0a0" stroke-width="1"><line x1="151.50" y1="959.5" x2="151.50" y2="1211"/><line x1="334.30" y1="959.5" x2="334.30" y2="1211"/><line x1="517.10" y1="959.5" x2="517.10" y2="1211"/><line x1="699.90" y1="959.5" x2="699.90" y2="1211"/><line x1="882.70" y1="959.5" x2="882.70" y2="1211"/><line x1="1065.50" y1="959.5" x2="1065.50" y2="1211"/><line x1="1248.30" y1="959.5" x2="1248.30" y2="1211"/><line x1="1431.10" y1="959.5" x2="1431.10" y2="1211"/><line x1="1613.90" y1="959.5" x2="1613.90" y2="1211"/><line x1="1796.70" y1="959.5" x2="1796.70" y2="1211"/><line x1="1979.50" y1="959.5" x2="1979.50" y2="1211"/><line x1="2162.30" y1="959.5" x2="2162.30" y2="1211"/></g><line x1="96.3" y1="959.5" x2="96.3" y2="1211" stroke="#cfcfcf"/><path d="M700.1 1211V1196.6H882.6V1211" fill="none" stroke="#2a2aff" stroke-width="1.6"/><path d="M700.1 1211V1197.5M882.6 1211V1197.5" fill="none" stroke="#a67fd6" stroke-width="1.6"/><path d="M1797.1 1211V1159.5H1979.8" fill="none" stroke="#2a2aff" stroke-width="1.6"/><path d="M1797.1 1211V1160.4" fill="none" stroke="#a67fd6" stroke-width="1.6"/><text x="90.2" y="963.70" text-anchor="end" font-family="Liberation Sans" font-size="11" fill="#222" letter-spacing="1.0">6.0 m</text><text x="90.2" y="1007.55" text-anchor="end" font-family="Liberation Sans" font-size="11" fill="#222" letter-spacing="1.0">5.9 m</text><text x="90.2" y="1051.40" text-anchor="end" font-family="Liberation Sans" font-size="11" fill="#222" letter-spacing="1.0">5.8 m</text><text x="90.2" y="1095.25" text-anchor="end" font-family="Liberation Sans" font-size="11" fill="#222" letter-spacing="1.0">5.7 m</text><text x="90.2" y="1139.10" text-anchor="end" font-family="Liberation Sans" font-size="11" fill="#222" letter-spacing="1.0">5.6 m</text><text x="90.2" y="1182.95" text-anchor="end" font-family="Liberation Sans" font-size="11" fill="#222" letter-spacing="1.0">5.5 m</text><text x="1159.8" y="950.1" text-anchor="middle" font-family="Liberation Sans" font-size="15" fill="#222">HTTP Response Time</text><text transform="translate(32.8 1201.2) rotate(-90)" font-family="Liberation Sans" font-size="11" fill="#222" textLength="45.5" lengthAdjust="spacingAndGlyphs">Seconds</text><text transform="translate(2293 931) rotate(90)" font-family="Liberation Sans" font-size="11" fill="#c4c4c4" textLength="86.5" lengthAdjust="spacingAndGlyphs">OpenNMS/JRobin</text></svg>
<div class="t" style="left:931.3px;top:1247.5px;font-size:12px;color:#333;letter-spacing:0.05px">OpenNMS <span style="color:#4c9d29">Copyright</span> © 2002-2016 <span style="color:#4c9d29">The OpenNMS Group, Inc.</span> OpenNMS® is a registered trademark of <span style="color:#4c9d29">The OpenNMS Group, Inc.</span></div>
</body></html>
